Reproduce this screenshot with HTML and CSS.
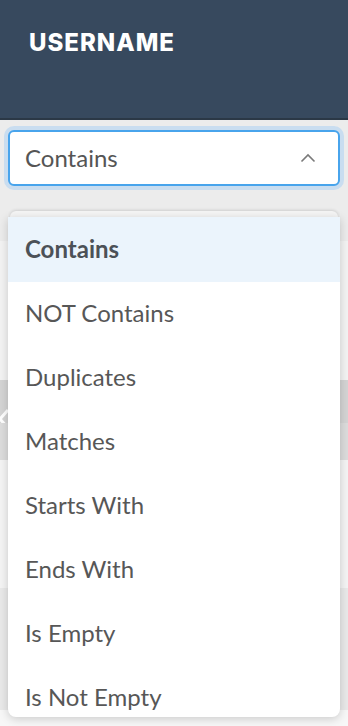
FILE: index.html
```html
<!DOCTYPE html>
<html>
<head>
<link rel="stylesheet" href="styles.css">
</head>
<body>
    <!-- column header -->
    <header class="topbar">
        <h1>USERNAME</h1>
    </header>

    <!-- filter type select (open) -->
    <section class="filter">
        <div class="select">
            <span>Contains</span>
            <svg class="chev" width="16" height="10" viewBox="0 0 16 10"><path d="M1.5 8.5 L8 2 L14.5 8.5" fill="none" stroke="#7a7a7a" stroke-width="1.6"/></svg>
        </div>
    </section>

    <!-- rows behind the menu -->
    <div class="results">
        <div class="card-edge"></div>
        <div class="band light"></div>
        <div class="band dark">
            <svg class="back" width="14" height="22" viewBox="0 0 14 22"><path d="M11 2 L3 11 L11 20" fill="none" stroke="#fff" stroke-width="3"/></svg>
        </div>
        <div class="band mid"></div>
        <div class="band light2"></div>
        <div class="band grey"></div>
        <div class="band pale"></div>
    </div>

    <ul class="menu">
        <li class="active">Contains</li>
        <li>NOT Contains</li>
        <li>Duplicates</li>
        <li>Matches</li>
        <li>Starts With</li>
        <li>Ends With</li>
        <li>Is Empty</li>
        <li>Is Not Empty</li>
    </ul>
</body>
</html>
```

FILE: styles.css
```css
body{
    margin: 0;
    background: #ececec;
    font-family: Lato, "Open Sans", sans-serif;
    position: relative;
    min-height: 726px;
    overflow: hidden;
}

.topbar{
    background: #37495e;
    height: 118px;
    border-bottom: 2px solid #2b3846;
    box-sizing: content-box;
}

.topbar h1{
    margin: 0;
    padding: 29px 0 0 29px;
    font-family: Inter, "Open Sans", sans-serif;
    font-size: 24px;
    font-weight: 800;
    letter-spacing: 1px;
    line-height: 28px;
    color: #fff;
}

.filter{
    padding: 10px 8px 0;
}

.select{
    height: 56px;
    box-sizing: border-box;
    border: 2px solid #48a4ec;
    border-radius: 6px;
    box-shadow: 0 0 0 4px #c9ddf0;
    background: #fff;
    display: flex;
    align-items: center;
    justify-content: space-between;
    padding: 0 22px 2px 15px;
    font-size: 24px;
    color: #555;
}

.chev{
    margin-top: 2px;
}

.results{
    margin-top: 25px;
}

.card-edge{
    margin: 0 10px;
    height: 30px;
    background: #f5f5f5;
    border-radius: 6px 6px 0 0;
    box-shadow: 0 -1px 3px rgba(0,0,0,0.12);
}

.band{
    position: relative;
}
.light{ height: 139px; background: #f3f3f3; }
.dark{ height: 43px; background: #d4d4d4; }
.mid{ height: 37px; background: #dcdcdc; }
.light2{ height: 128px; background: #f4f4f4; }
.grey{ height: 122px; background: #e9e9e9; }
.pale{ height: 40px; background: #f7f7f7; }

.back{
    position: absolute;
    left: -3px;
    top: 28px;
}

.menu{
    position: absolute;
    top: 217px;
    left: 8px;
    width: 332px;
    height: 500px;
    margin: 0;
    padding: 0;
    list-style: none;
    background: #fff;
    border-radius: 0 0 8px 8px;
    box-shadow: 0 2px 10px rgba(0,0,0,0.18);
    overflow: hidden;
}

.menu li{
    height: 64px;
    box-sizing: border-box;
    display: flex;
    align-items: center;
    padding: 0 0 3px 17px;
    font-size: 24px;
    color: #575757;
}

.menu li.active{
    background: #ebf4fc;
    font-weight: 700;
    color: #4c5157;
    height: 65px;
}
```
